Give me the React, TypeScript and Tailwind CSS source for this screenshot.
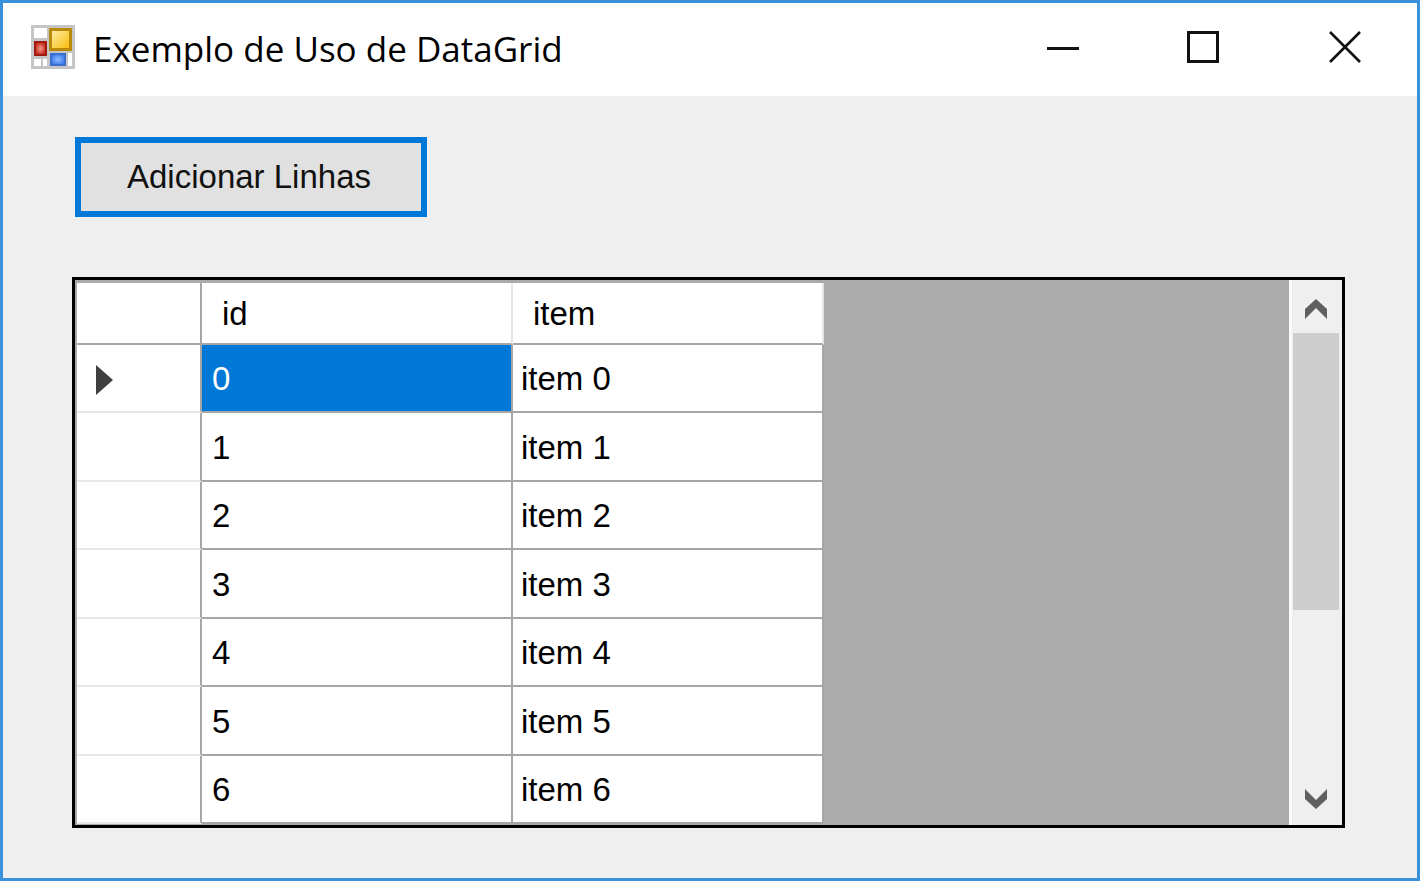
import { useState } from "react";

const ROWS = [0, 1, 2, 3, 4, 5, 6].map((id) => ({ id, item: `item ${id}` }));

function AppIcon() {
  return (
    <svg viewBox="0 0 44 44" className="size-11 shrink-0" aria-hidden="true">
      <defs>
        <linearGradient id="gold" x1="0" y1="0" x2="1" y2="1">
          <stop offset="0" stopColor="#fff0b0" />
          <stop offset="1" stopColor="#f7b900" />
        </linearGradient>
        <radialGradient id="red">
          <stop offset="0" stopColor="#f09a8c" />
          <stop offset="1" stopColor="#c8281a" />
        </radialGradient>
        <radialGradient id="blue">
          <stop offset="0" stopColor="#8fbcff" />
          <stop offset="1" stopColor="#3f7de8" />
        </radialGradient>
      </defs>
      <rect width="44" height="44" fill="#c6c6c6" />
      <rect x="3" y="3" width="13" height="10" fill="#fff" />
      <rect x="3" y="34" width="7" height="7" fill="#fff" />
      <rect x="12" y="34" width="4" height="7" fill="#fff" />
      <rect x="37" y="28" width="4" height="13" fill="#fff" />
      <rect x="19.5" y="4.5" width="20" height="20" fill="url(#gold)" stroke="#b98a08" strokeWidth="3" />
      <rect x="4" y="17" width="11" height="13" fill="url(#red)" stroke="#a01a10" strokeWidth="2" />
      <rect x="20" y="29" width="14" height="11" fill="url(#blue)" stroke="#3a6fd0" strokeWidth="2" />
    </svg>
  );
}

function TitleBar() {
  return (
    <header className="flex h-[93px] items-center bg-white pb-[6px] pl-7">
      <AppIcon />
      <h1 className="ml-[18px] flex-1 whitespace-nowrap pt-1 font-['Open_Sans','Noto_Sans',sans-serif] text-[35px] leading-[48px] text-black">
        Exemplo de Uso de DataGrid
      </h1>
      <div className="flex">
        <button type="button" aria-label="Minimizar" className="flex h-20 w-[140px] items-center justify-center">
          <svg viewBox="0 0 32 32" className="size-8" fill="none" stroke="#111" strokeWidth="3">
            <path d="M0 17.5H32" />
          </svg>
        </button>
        <button type="button" aria-label="Maximizar" className="flex h-20 w-[140px] items-center justify-center">
          <svg viewBox="0 0 32 32" className="size-8" fill="none" stroke="#111" strokeWidth="3">
            <rect x="1.5" y="1.5" width="29" height="29" />
          </svg>
        </button>
        <button type="button" aria-label="Fechar" className="flex h-20 w-36 items-center justify-center">
          <svg viewBox="0 0 32 32" className="size-8" fill="none" stroke="#111" strokeWidth="2.6">
            <path d="M1 1L31 31M31 1L1 31" />
          </svg>
        </button>
      </div>
    </header>
  );
}

function ScrollBar() {
  return (
    <div className="flex w-[53px] flex-col border-l-3 border-[#fafafa] bg-[#efefef]">
      <button type="button" aria-label="Rolar para cima" className="flex h-[53px] w-12 items-center justify-center pt-1">
        <svg viewBox="0 0 24 20" className="h-5 w-6" fill="#606060">
          <path d="M12 0L23 10V20L12 9L1 20V10Z" />
        </svg>
      </button>
      <div className="ml-px h-[277px] w-[46px] bg-[#cdcdcd]" />
      <div className="flex-1" />
      <button type="button" aria-label="Rolar para baixo" className="flex h-[53px] w-12 items-center justify-center">
        <svg viewBox="0 0 24 20" className="h-5 w-6" fill="#606060">
          <path d="M12 20L23 10V0L12 11L1 0V10Z" />
        </svg>
      </button>
    </div>
  );
}

export default function App() {
  const [selected, setSelected] = useState(0);
  return (
    <div className="flex min-h-screen flex-col border-3 border-[#3a92dc] bg-[#efefef] font-['Liberation_Sans',Arial,sans-serif] text-[33px] leading-[48px] text-black">
      <TitleBar />
      <main className="flex flex-col items-start pt-[41px] pr-[72px] pb-[50px] pl-[69px]">
        <button
          type="button"
          className="ml-[3px] flex h-20 w-[352px] items-center justify-center border-6 border-[#0078d7] bg-[#e1e1e1] pr-1 whitespace-nowrap text-[#111]"
        >
          Adicionar Linhas
        </button>
        <div className="mt-[60px] flex w-full border-3 border-black bg-[#ababab]">
          <div className="flex-1 pt-[3px] pb-px pl-[2px]">
            <table className="table-fixed border-separate border-spacing-0 bg-white text-left">
              <colgroup>
                <col className="w-[125px]" />
                <col className="w-[311px]" />
                <col className="w-[311px]" />
              </colgroup>
              <thead>
                <tr className="h-[62px]">
                  <td className="border-r-2 border-b-2 border-[#a6a6a6] p-0" />
                  <th scope="col" className="border-r-2 border-b-2 border-r-[#e5e5e5] border-b-[#a6a6a6] p-0 pt-[2px] pl-5 font-normal">id</th>
                  <th scope="col" className="border-r-2 border-b-2 border-r-[#e5e5e5] border-b-[#a6a6a6] p-0 pt-[2px] pl-5 font-normal">item</th>
                </tr>
              </thead>
              <tbody>
                {ROWS.map((row) => (
                  <tr key={row.id} className="odd:h-[68px] even:h-[69px]" onClick={() => setSelected(row.id)}>
                    <td className="border-r-2 border-b-2 border-r-[#a6a6a6] border-b-[#e8e8e8] p-0 pl-[19px]">
                      {row.id === selected && (
                        <svg viewBox="0 0 17 30" className="mt-1 h-[30px] w-[17px]" fill="#404040">
                          <path d="M0 0L17 15L0 30Z" />
                        </svg>
                      )}
                    </td>
                    <td
                      className={
                        row.id === selected
                          ? "border-r-2 border-b-2 border-[#a6a6a6] bg-[#0078d7] p-0 pt-[2px] pl-[10px] text-white"
                          : "border-r-2 border-b-2 border-[#a6a6a6] p-0 pt-[2px] pl-[10px]"
                      }
                    >
                      {row.id}
                    </td>
                    <td className="border-r-2 border-b-2 border-[#a6a6a6] p-0 pt-[2px] pl-2">{row.item}</td>
                  </tr>
                ))}
              </tbody>
            </table>
          </div>
          <ScrollBar />
        </div>
      </main>
    </div>
  );
}
